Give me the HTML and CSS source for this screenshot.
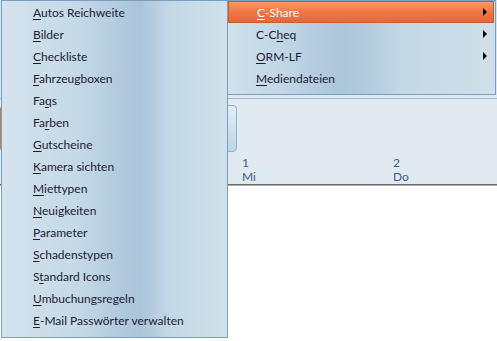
FILE: index.html
```html
<!DOCTYPE html>
<html lang="de">
<head>
    <meta charset="UTF-8">
    <title>Stammdaten Menü</title>
    <link rel="stylesheet" href="styles.css">
</head>
<body>
    <div class="app">
        <div class="ribbon"></div>
        <div class="toolbar">
            <div class="tools">
                <div class="tool tool-active"></div>
                <div class="tool"></div>
            </div>
            <div class="days">
                <div class="day"><span>1</span><span>Mi</span></div>
                <div class="day"><span>2</span><span>Do</span></div>
            </div>
        </div>
        <div class="grid"></div>
    </div>

    <!-- Dropdown -->
    <ul class="menu menu-main">
        <li class="item"><span><u>A</u>utos Reichweite</span></li>
        <li class="item"><span><u>B</u>ilder</span></li>
        <li class="item"><span><u>C</u>heckliste</span></li>
        <li class="item"><span><u>F</u>ahrzeugboxen</span></li>
        <li class="item"><span>Fa<u>q</u>s</span></li>
        <li class="item"><span>Fa<u>r</u>ben</span></li>
        <li class="item"><span><u>G</u>utscheine</span></li>
        <li class="item"><span><u>K</u>amera sichten</span></li>
        <li class="item"><span><u>M</u>iettypen</span></li>
        <li class="item"><span><u>N</u>euigkeiten</span></li>
        <li class="item"><span><u>P</u>arameter</span></li>
        <li class="item"><span><u>S</u>chadenstypen</span></li>
        <li class="item"><span>S<u>t</u>andard Icons</span></li>
        <li class="item"><span><u>U</u>mbuchungsregeln</span></li>
        <li class="item"><span><u>E</u>-Mail Passwörter verwalten</span></li>
    </ul>

    <!-- Submenu -->
    <ul class="menu menu-sub">
        <li class="item item-hl"><span><u>C</u>-Share</span><i class="arrow"></i></li>
        <li class="item"><span>C-C<u>h</u>eq</span><i class="arrow"></i></li>
        <li class="item"><span><u>O</u>RM-LF</span><i class="arrow"></i></li>
        <li class="item"><span><u>M</u>ediendateien</span></li>
    </ul>
</body>
</html>
```

FILE: styles.css
```css
/* Menu over the planner */
body {
    margin: 0;
    width: 497px;
    height: 341px;
    overflow: hidden;
    position: relative;
    font-family: Lato, "Open Sans", sans-serif;
    font-size: 12px;
    background: #fff;
}
.app {
    height: 341px;
    display: flex;
    flex-direction: column;
}
.ribbon {
    height: 98px;
    background: linear-gradient(#d3e3ee, #dfe8f0);
    border-bottom: 1px solid #9fbdd8;
}
.toolbar {
    height: 85px;
    background: #e1e9f1;
    display: flex;
    flex-direction: column;
    overflow: hidden;
}
.tools {
    display: flex;
    gap: 8px;
    padding-top: 6px;
}
.tool {
    width: 119px;
    height: 47px;
    box-sizing: border-box;
    border: 1px solid #8fb4d2;
    border-radius: 4px;
    background: linear-gradient(#e3edf5, #bcd4e6);
}
.tool-active {
    width: 110px;
    border-color: #d0744a;
    background: linear-gradient(#f6b08c, #ec8657);
}
.days {
    display: flex;
    padding: 4px 0 0 242px;
    color: #3d5d8c;
}
.day {
    width: 151px;
    flex-shrink: 0;
    display: flex;
    flex-direction: column;
    line-height: 14px;
}
.grid {
    flex: 1;
    border-top: 1px solid #6d6d6d;
    box-shadow: inset 0 1px 0 #a9a9a9;
}

.menu {
    position: absolute;
    top: 0;
    margin: 0;
    padding: 0;
    list-style: none;
    border: 1px solid #7b9ebf;
    color: #1b1b33;
}
.menu-main {
    left: 1px;
    width: 225px;
    padding-bottom: 6px;
    background: linear-gradient(to right, #d4e3ee 0%, #c4d8e6 35%, #afc8dc 55%, #abc5da 62%, #c3d7e5 74%, #d0e1eb 100%);
}
.menu-sub {
    left: 227px;
    width: 267px;
    padding-bottom: 5px;
    background: linear-gradient(to right, #d1e1ec 0%, #bed3e3 25%, #abc5da 42%, #b0c9dc 50%, #c4d8e5 65%, #cfe0ea 100%);
}
.item {
    height: 22px;
    box-sizing: border-box;
    display: flex;
    align-items: center;
    justify-content: space-between;
    padding: 0 8px 0 31px;
    white-space: nowrap;
}
.menu-sub .item {
    padding-left: 28px;
}
.item u {
    text-underline-offset: 2px;
}
.item-hl {
    margin-right: 1px;
    border: 1px solid #c65f30;
    background: linear-gradient(#f49a68, #ee7844 50%, #e8653a);
    color: #fff;
    padding-right: 6px;
}
.arrow {
    width: 0;
    height: 0;
    border-left: 4px solid #000;
    border-top: 4px solid transparent;
    border-bottom: 4px solid transparent;
}
```
